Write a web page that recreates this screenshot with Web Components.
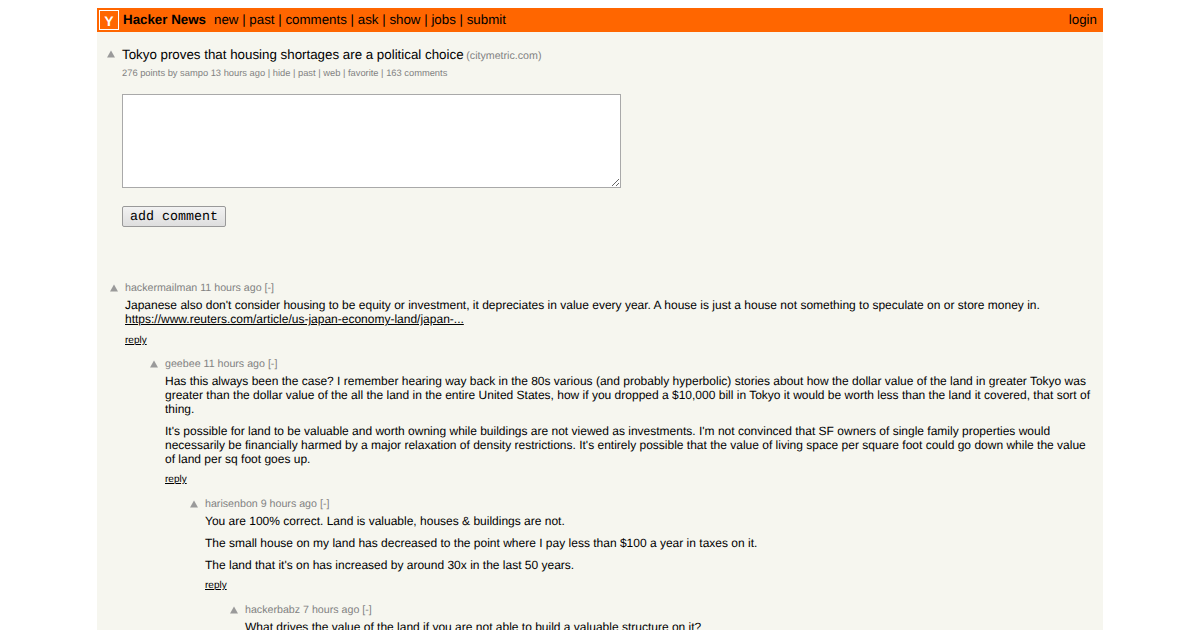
<!DOCTYPE html>
<html><head><meta charset="utf-8"><title>Hacker News</title>
<style>
html,body{margin:0;height:630px;overflow:hidden;background:#fff}
body{padding:8px 97px 0;box-sizing:border-box;font-family:"Liberation Sans",Arial,sans-serif;color:#000}
hn-main{height:622px;overflow:hidden}
</style></head><body>
<hn-main>
<hn-header></hn-header>
<hn-story></hn-story>
<hn-reply-form></hn-reply-form>
<hn-comment-tree>
<hn-comment user="hackermailman" age="11 hours ago" level="0" style="--reply-gap:9px;--tail:10px">
<p>Japanese also don't consider housing to be equity or investment, it depreciates in value every year. A house is just a house not something to speculate on or store money in.<br><a href="#" style="color:#000">https://www.reuters.com/article/us-japan-economy-land/japan-...</a></p>
</hn-comment>
<hn-comment user="geebee" age="11 hours ago" level="1">
<p>Has this always been the case? I remember hearing way back in the 80s various (and probably hyperbolic) stories about how the dollar value of the land in greater Tokyo was greater than the dollar value of the all the land in the entire United States, how if you dropped a $10,000 bill in Tokyo it would be worth less than the land it covered, that sort of thing.</p>
<p>It's possible for land to be valuable and worth owning while buildings are not viewed as investments. I'm not convinced that SF owners of single family properties would necessarily be financially harmed by a major relaxation of density restrictions. It's entirely possible that the value of living space per square foot could go down while the value of land per sq foot goes up.</p>
</hn-comment>
<hn-comment user="harisenbon" age="9 hours ago" level="2">
<p>You are 100% correct. Land is valuable, houses &amp; buildings are not.</p>
<p>The small house on my land has decreased to the point where I pay less than $100 a year in taxes on it.</p>
<p>The land that it's on has increased by around 30x in the last 50 years.</p>
</hn-comment>
<hn-comment user="hackerbabz" age="7 hours ago" level="3">
<p>What drives the value of the land if you are not able to build a valuable structure on it?</p>
</hn-comment>
</hn-comment-tree>
</hn-main>
<script>
const arrow = `<svg width="10" height="10" viewBox="0 0 10 10" aria-hidden="true"><path d="M5 1.5 L9 8.5 L1 8.5 Z" fill="#9a9a9a"/></svg>`;
function def(name, css, html){
  customElements.define(name, class extends HTMLElement{
    connectedCallback(){
      if(this.shadowRoot) return;
      const r=this.attachShadow({mode:'open'});
      r.innerHTML=`<style>${css}</style>`+(typeof html==='function'?html(this):html);
    }
  });
}
def('hn-main',`:host{display:block;background:#f6f6ef;overflow:hidden}`,`<slot></slot>`);
def('hn-header',`
:host{display:flex;align-items:center;height:24px;background:#ff6600;padding:0 6px 0 2px;font-size:13.33px;line-height:16px;text-rendering:geometricPrecision}
.logo{width:18px;height:17px;padding-top:1px;border:1px solid #fff;display:flex;align-items:center;justify-content:center;color:#fff;font-weight:bold;font-size:14px;margin-right:4px;flex:none}
b{margin-right:8px}
a{color:#000;text-decoration:none}
.login{margin-left:auto}
`,`<span class="logo">Y</span><b>Hacker News</b><span><a href="#">new</a> | <a href="#">past</a> | <a href="#">comments</a> | <a href="#">ask</a> | <a href="#">show</a> | <a href="#">jobs</a> | <a href="#">submit</a></span><a class="login" href="#">login</a>`);
def('hn-story',`
:host{display:grid;grid-template-columns:10px 1fr;column-gap:6px;padding:15px 0 0 9px;color:#828282;text-rendering:geometricPrecision}
svg{display:block;margin-top:2px}
.t{font-size:13.33px;line-height:16px;color:#000}
.t small{font-size:10.67px;color:#828282;margin-left:-1px}
.s{font-size:9.33px;line-height:12px;margin-top:3px;grid-column:2}
a{color:inherit;text-decoration:none}
`,`${arrow}<div class="t"><a href="#" style="color:#000">Tokyo proves that housing shortages are a political choice</a> <small>(citymetric.com)</small></div><div class="s">276 points by sampo 13 hours ago | hide | past | web | favorite | 163 comments</div>`);
def('hn-reply-form',`
:host{display:block;padding:15px 0 0 25px}
textarea{display:block;box-sizing:border-box;width:499px;height:94px;margin:0;padding:2px;border:1px solid #a9a9a9;background:#fff;font:13.33px "Liberation Mono",monospace;border-radius:0;outline:none}
button{display:block;box-sizing:border-box;width:104px;height:21px;margin:18px 0 0;padding:1px 0 0;border:1px solid #999;border-radius:2px;background:linear-gradient(#f2f2f2,#dedede);color:#000;font:13.33px "Liberation Mono",monospace;text-rendering:geometricPrecision}
`,`<textarea aria-label="comment"></textarea><button>add comment</button>`);
def('hn-comment-tree',`:host{display:block;padding-top:54px}`,`<slot></slot>`);
def('hn-comment',`
:host{display:grid;grid-template-columns:10px 1fr;column-gap:6px;padding:0 10px var(--tail,11px) 12px;font-size:12px;line-height:14px;text-rendering:geometricPrecision}
.arrow svg{display:block;margin-top:2px}
.head{font-size:10.67px;line-height:14px;color:#828282;margin-bottom:3px}
.body{grid-column:2}
::slotted(p){margin:0 0 8px;font-size:12px;line-height:14px}
.reply{display:block;font-size:10px;line-height:12px;color:#000;text-decoration:underline;margin-top:var(--reply-gap,7px)}
a{color:inherit}
`,(el)=>`<div class="arrow">${arrow}</div><div class="head">${el.getAttribute('user')} ${el.getAttribute('age')} [-]</div><div class="body"><slot></slot><a class="reply" href="#">reply</a></div>`);
</script>
<script>
document.querySelectorAll('hn-comment').forEach(c=>{c.style.marginLeft=(+c.getAttribute('level')*40)+'px'});
</script>
</body></html>
